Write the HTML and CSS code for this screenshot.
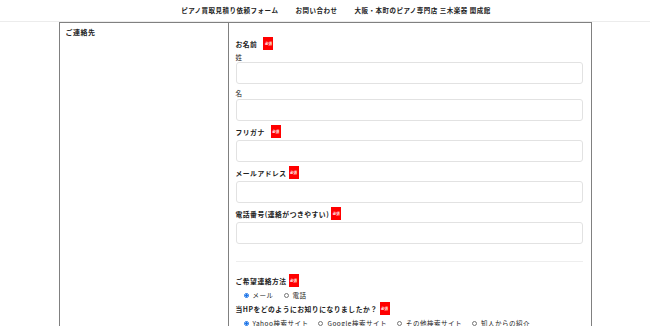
FILE: index.html
```html
<!DOCTYPE html>
<html lang="ja">
<head>
<meta charset="utf-8">
<title>ピアノ買取見積り依頼フォーム</title>
<link rel="stylesheet" href="styles.css">
</head>
<body>
<header class="header">
  <nav class="nav">
    <a class="nav-item">ピアノ買取見積り依頼フォーム</a>
    <a class="nav-item">お問い合わせ</a>
    <a class="nav-item">大阪・本町のピアノ専門店 三木楽器 開成館</a>
  </nav>
</header>
<main class="form-table">
  <div class="cell cell-head">ご連絡先</div>
  <div class="cell cell-body">
    <div class="label-row"><span class="label">お名前</span><span class="badge badge-wide">必須</span></div>
    <div class="sublabel first">姓</div>
    <div class="input"></div>
    <div class="sublabel">名</div>
    <div class="input input-tight"></div>
    <div class="label-row"><span class="label">フリガナ</span><span class="badge badge-wide">必須</span></div>
    <div class="input"></div>
    <div class="label-row"><span class="label">メールアドレス</span><span class="badge">必須</span></div>
    <div class="input"></div>
    <div class="label-row"><span class="label">電話番号(連絡がつきやすい)</span><span class="badge">必須</span></div>
    <div class="input"></div>
    <div class="rule"></div>
    <div class="label-row"><span class="label">ご希望連絡方法</span><span class="badge">必須</span></div>
    <div class="radio-row">
      <span class="radio-item"><span class="radio checked"></span>メール</span>
      <span class="radio-item"><span class="radio"></span>電話</span>
    </div>
    <div class="label-row"><span class="label">当HPをどのようにお知りになりましたか？</span><span class="badge">必須</span></div>
    <div class="radio-row">
      <span class="radio-item"><span class="radio checked"></span>Yahoo検索サイト</span>
      <span class="radio-item"><span class="radio"></span>Google検索サイト</span>
      <span class="radio-item"><span class="radio"></span>その他検索サイト</span>
      <span class="radio-item"><span class="radio"></span>知人からの紹介</span>
    </div>
  </div>
</main>
</body>
</html>
```

FILE: styles.css
```css
html, body {
  margin: 0;
  padding: 0;
  background: #fff;
}
body {
  font-family: "Noto Sans CJK JP", "Noto Sans", sans-serif;
  color: #222;
  font-size: 6.5px;
  letter-spacing: 0.5px;
  overflow: hidden;
}
.header {
  height: 21px;
  border-bottom: 1px solid #ececec;
}
.nav {
  display: flex;
  justify-content: center;
  gap: 17px;
  padding-left: 22px;
  line-height: 20px;
  font-weight: bold;
}
.nav-item {
  color: #222;
  text-decoration: none;
}
.form-table {
  box-sizing: border-box;
  width: 533px;
  margin: 0 auto;
  display: grid;
  grid-template-columns: 168px 1fr;
  border-left: 1px solid #808080;
  border-right: 1px solid #808080;
  border-top: 1px solid #808080;
  min-height: 320px;
}
.cell-head {
  padding: 4px 6px;
  line-height: 10px;
  font-weight: bold;
  font-size: 7px;
}
.cell-body {
  border-left: 1px solid #808080;
  padding: 14px 8px 0 7px;
}
.label-row {
  display: flex;
  align-items: center;
  height: 13px;
  margin-bottom: 2px;
}
.label {
  font-weight: bold;
  font-size: 6.8px;
  margin-right: 2px;
}
.badge {
  width: 10px;
  height: 13px;
  background: #ff0000;
  color: #fff;
  font-size: 3.5px;
  letter-spacing: 0;
  display: flex;
  align-items: center;
  justify-content: center;
  font-weight: bold;
}
.badge-wide {
  margin-left: 4px;
}
.sublabel {
  line-height: 10px;
  margin-top: 4px;
  font-size: 6.5px;
}
.sublabel.first {
  margin-top: 1px;
  margin-bottom: 0;
}
.input {
  height: 20px;
  border: 1px solid #e2e2e2;
  border-radius: 3px;
  background: #fff;
  margin-bottom: 4px;
}
.input-tight {
  margin-top: 1px;
}
.rule {
  height: 1px;
  background: #eeeeee;
  margin: 17px 0 12px;
}
.radio-row {
  display: flex;
  align-items: center;
  gap: 10px;
  height: 12px;
  margin: 1px 0 1px 8px;
}
.radio-item {
  display: flex;
  align-items: center;
  gap: 4px;
}
.radio {
  width: 5px;
  height: 5px;
  border: 0.8px solid #767676;
  border-radius: 50%;
  box-sizing: border-box;
  background: #fff;
}
.radio.checked {
  border: 1px solid #1a73e8;
  background: radial-gradient(circle, #1a73e8 0 1.2px, #fff 1.3px);
}
```
